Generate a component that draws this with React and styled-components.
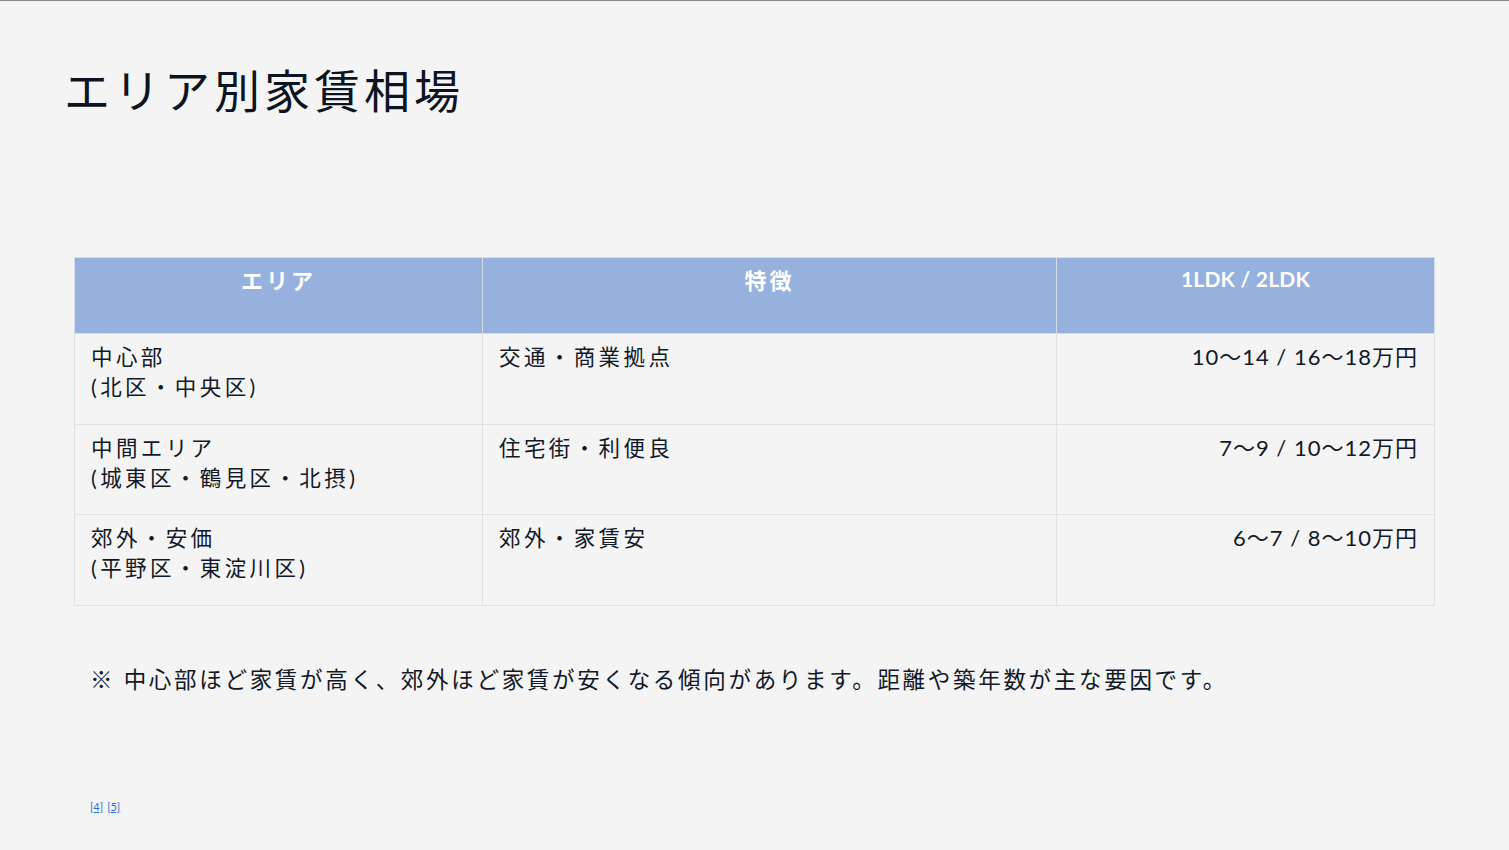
import React from 'react';
import styled, { createGlobalStyle } from 'styled-components';

const GlobalStyle = createGlobalStyle`
  html, body {
    margin: 0;
    padding: 0;
    background: #f4f4f4;
  }
  body {
    font-family: Lato, "Noto Sans CJK JP", sans-serif;
    color: #111827;
  }
`;

const StyledPage = styled.div`
  width: 1509px;
  height: 850px;
  box-sizing: border-box;
  border-top: 1px solid #8a8a8a;
  padding: 0 75px 0 64px;
  display: flex;
  flex-direction: column;
`;

const StyledTitle = styled.h1`
  margin: 57px 0 0;
  font-family: "Noto Sans CJK JP", sans-serif;
  font-weight: 400;
  font-size: 46px;
  line-height: 60px;
  letter-spacing: 4px;
  color: #0d1421;
`;

const StyledTable = styled.table`
  margin: 139px 0 0 10px;
  width: 1360px;
  border-collapse: collapse;
  table-layout: fixed;
  line-height: 30px;
`;

const StyledHeadCell = styled.th`
  height: 76px;
  box-sizing: border-box;
  padding: 6px 16px 0;
  vertical-align: top;
  background: #96b1de;
  color: #ffffff;
  font-weight: 700;
  text-align: center;
  border: 1px solid #d6dce6;
  font-size: ${({latin}) => latin ? '21px' : '22px'};
  letter-spacing: ${({latin}) => latin ? '0.2px' : '3px'};
  font-family: ${({latin}) => latin ? 'Lato, "Noto Sans CJK JP", sans-serif' : '"Noto Sans CJK JP", sans-serif'};
`;

const StyledCell = styled.td`
  height: 90.7px;
  box-sizing: border-box;
  padding: 8px 16px 0;
  vertical-align: top;
  text-align: ${({price}) => price ? 'right' : 'left'};
  font-size: ${({price}) => price ? '22px' : '21.5px'};
  letter-spacing: ${({price}) => price ? '1px' : '3.4px'};
  border: 1px solid #e2e2e2;
  color: #111827;
`;

const StyledNote = styled.p`
  margin: 59px 0 0 26px;
  font-size: 22.5px;
  line-height: 30px;
  letter-spacing: 2.7px;
  color: #111827;
`;

const StyledRefs = styled.div`
  margin: 105px 0 0 26px;
  font-size: 11px;
  line-height: 14px;
  display: flex;
  gap: 4px;
`;

const StyledRef = styled.a`
  color: #1f6fcf;
  text-decoration: underline;
`;

const rows = [
  {area: ['中心部', '(北区・中央区)'], feature: '交通・商業拠点', price: '10～14 / 16～18万円'},
  {area: ['中間エリア', '(城東区・鶴見区・北摂)'], feature: '住宅街・利便良', price: '7～9 / 10～12万円'},
  {area: ['郊外・安価', '(平野区・東淀川区)'], feature: '郊外・家賃安', price: '6～7 / 8～10万円'},
];

const App = () => (
  <>
    <GlobalStyle />
    <StyledPage>
      <StyledTitle>エリア別家賃相場</StyledTitle>
      <StyledTable>
        <colgroup>
          <col style={{width: '408px'}} />
          <col style={{width: '574px'}} />
          <col style={{width: '378px'}} />
        </colgroup>
        <thead>
          <tr>
            <StyledHeadCell>エリア</StyledHeadCell>
            <StyledHeadCell>特徴</StyledHeadCell>
            <StyledHeadCell latin>1LDK / 2LDK</StyledHeadCell>
          </tr>
        </thead>
        <tbody>
          {rows.map(row => (
            <tr key={row.feature}>
              <StyledCell>{row.area[0]}<br />{row.area[1]}</StyledCell>
              <StyledCell>{row.feature}</StyledCell>
              <StyledCell price>{row.price}</StyledCell>
            </tr>
          ))}
        </tbody>
      </StyledTable>
      <StyledNote>※ 中心部ほど家賃が高く、郊外ほど家賃が安くなる傾向があります。距離や築年数が主な要因です。</StyledNote>
      <StyledRefs>
        <StyledRef href="#ref4">[4]</StyledRef>
        <StyledRef href="#ref5">[5]</StyledRef>
      </StyledRefs>
    </StyledPage>
  </>
);

export default App;
